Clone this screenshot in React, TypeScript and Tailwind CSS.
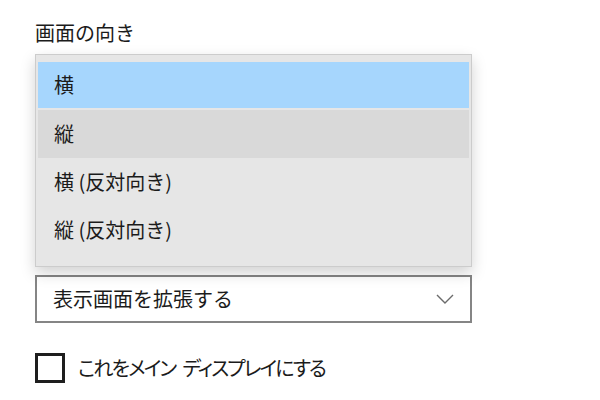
const items = ["横", "縦", "横 (反対向き)", "縦 (反対向き)"]

export default function App() {
    return (
        <div className="w-[600px] h-[400px] bg-white pl-[35px] text-[#1b1b1b] [font-family:'Noto_Sans_CJK_JP','Noto_Sans',sans-serif]">
            <div className="pt-[19px] h-[48px] text-[20px] leading-[28px]">画面の向き</div>

            <div className="mt-[6px] w-[437px] border border-[#cccccc] bg-[#e6e6e6] pt-[7px] pb-[12px] px-[2px] shadow-[0_6px_14px_rgba(0,0,0,0.18)] relative z-10">
                {items.map((label, i) => (
                    <div
                        key={label}
                        className={
                            i === 0
                                ? "h-[46px] mb-[2px] flex items-center pl-[16px] text-[20px] bg-[#a6d6fd]"
                                : i === 1
                                  ? "h-[48px] flex items-center pl-[16px] text-[20px] bg-[#d9d9d9]"
                                  : "h-[48px] flex items-center pl-[16px] text-[20px]"
                        }
                    >
                        {label}
                    </div>
                ))}
            </div>

            <div className="mt-[8px] w-[437px] h-[48px] border-2 border-[#858585] bg-white flex items-center justify-between pl-[16px] pr-[16px] text-[20px]">
                <span>表示画面を拡張する</span>
                <svg width="18" height="10" viewBox="0 0 18 10" fill="none">
                    <path d="M1 1l8 8 8-8" stroke="#6b6b6b" strokeWidth="1.4" />
                </svg>
            </div>

            <div className="mt-[30px] flex items-center gap-[13px]">
                <div className="w-[30px] h-[30px] border-[3px] border-[#1e1e1e] bg-white" />
                <span className="text-[20px] tracking-[-1.9px] [font-feature-settings:'palt']">
                    これをメイン<span className="ml-[7px]">ディスプレイにする</span>
                </span>
            </div>
        </div>
    )
}
